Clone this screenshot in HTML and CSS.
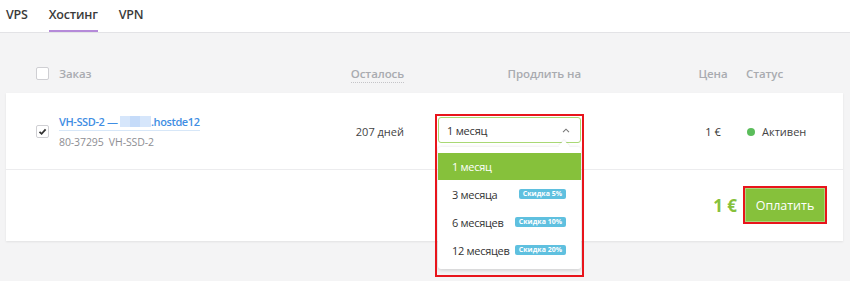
FILE: index.html
```html
<!DOCTYPE html>
<html lang="ru">
<head>
<meta charset="utf-8">
<link rel="stylesheet" href="styles.css">
</head>
<body>
<nav class="tabs">
  <a class="tab">VPS</a>
  <a class="tab active">Хостинг</a>
  <a class="tab">VPN</a>
</nav>
<main class="page">
  <div class="grid head">
    <span class="check"></span>
    <span class="h">Заказ</span>
    <span class="h right"><span class="dotted">Осталось</span></span>
    <span></span>
    <span class="h right">Продлить на</span>
    <span></span>
    <span class="h center">Цена</span>
    <span class="h status-h">Статус</span>
  </div>
  <section class="card">
    <div class="grid row">
      <span class="check checked">
        <svg viewBox="0 0 13 13" width="13" height="13"><path d="M3.5 6.8 L5.6 8.8 L9.6 4.3" fill="none" stroke="#333" stroke-width="1.8"/></svg>
      </span>
      <div class="order">
        <a class="title">VH-SSD-2 — <span class="blur"><i></i><i></i><i></i></span>.hostde12</a>
        <div class="sub">80-37295&nbsp; VH-SSD-2</div>
      </div>
      <span class="right days">207 дней</span>
      <span></span>
      <div class="select-wrap">
        <div class="select">
          <span>1 месяц</span>
          <svg class="chev" viewBox="0 0 8 5" width="8" height="5"><path d="M1 4.2 L4 1.2 L7 4.2" fill="none" stroke="#777" stroke-width="1.1"/></svg>
        </div>
        <ul class="menu">
          <li class="opt sel">1 месяц</li>
          <li class="opt">3 месяца <b class="badge">Скидка 5%</b></li>
          <li class="opt">6 месяцев <b class="badge">Скидка 10%</b></li>
          <li class="opt">12 месяцев <b class="badge">Скидка 20%</b></li>
        </ul>
      </div>
      <span></span>
      <span class="center price">1 €</span>
      <span class="status"><i class="dot"></i>Активен</span>
    </div>
    <div class="pay">
      <span class="total">1 €</span>
      <button class="btn">Оплатить</button>
    </div>
  </section>
</main>
</body>
</html>
```
FILE: styles.css
```css
* { box-sizing: border-box; }
html, body { margin: 0; padding: 0; }
body {
  width: 850px;
  height: 281px;
  overflow: hidden;
  background: #f4f4f5;
  font-family: "Open Sans", "Noto Sans", sans-serif;
  color: #333;
}
.tabs {
  height: 33px;
  background: #fff;
  border-bottom: 1px solid #e3e3e6;
  display: flex;
  gap: 21px;
  padding-left: 6px;
}
.tab {
  font-size: 12.5px;
  font-weight: 600;
  color: #3a3a3a;
  line-height: 30px;
  height: 32px;
  letter-spacing: -0.2px;
}
.tab.active {
  border-bottom: 2px solid #b58ad9;
}
.page {
  padding: 0 7px 0 6px;
}
.grid {
  display: grid;
  grid-template-columns: 23px 245px 100px 34px 143px 100px 64px 98px;
  padding-left: 30px;
  align-items: center;
}
.head {
  height: 60px;
  padding-top: 20px;
}
.h {
  font-size: 11.5px;
  font-weight: 600;
  color: #a9abb0;
  letter-spacing: -0.1px;
}
.right { text-align: right; }
.center { text-align: center; }
.dotted {
  border-bottom: 1px dotted #c4c4c8;
  padding-bottom: 1px;
}
.status-h { padding-left: 1px; }
.check {
  width: 13px;
  height: 13px;
  border: 1px solid #cfcfd3;
  border-radius: 2px;
  background: #fff;
  display: block;
}
.check svg { display: block; margin: -1px; }
.card {
  background: #fff;
  box-shadow: 0 1px 2px rgba(0,0,0,0.08);
  height: 148px;
}
.row {
  height: 77px;
  border-bottom: 1px solid #ececee;
}
.order { margin-top: -5px; }
.title {
  display: inline-block;
  font-size: 11px;
  font-weight: 600;
  color: #3f8ee3;
  border-bottom: 1px solid #d7e7f8;
  padding-bottom: 1px;
  line-height: 15px;
  letter-spacing: -0.4px;
}
.blur {
  display: inline-flex;
  vertical-align: -1px;
  height: 11px;
  width: 31px;
  background: #d6e6fb;
}
.blur i { display: block; height: 11px; width: 10px; }
.blur i:nth-child(2) { background: #c5dbf9; }
.sub {
  font-size: 10.5px;
  color: #8e8e93;
  margin-top: 4px;
  letter-spacing: -0.1px;
}
.days { font-size: 11px; color: #444; padding-top: 1px; }
.select-wrap {
  position: relative;
  height: 26px;
  margin-top: -2px;
}
.select-wrap::after {
  content: "";
  position: absolute;
  left: -3px;
  right: -3px;
  top: -3px;
  height: 159px;
  border: 2px solid #e8141b;
  pointer-events: none;
  z-index: 3;
}
.select {
  height: 26px;
  border: 1px solid #a9d874;
  border-radius: 3px;
  display: flex;
  align-items: center;
  justify-content: space-between;
  padding: 0 10px 0 8px;
  font-size: 11px;
  color: #333;
  background: #fff;
  letter-spacing: -0.2px;
}
.chev { margin-top: 1px; }
.menu {
  position: absolute;
  left: 0;
  top: 30px;
  width: 143px;
  margin: 0;
  padding: 6px 0 5px;
  list-style: none;
  background: #fff;
  border-radius: 3px;
  box-shadow: 0 1px 4px rgba(0,0,0,0.18);
  z-index: 2;
}
.menu::before {
  content: "";
  position: absolute;
  top: -5px;
  right: 13px;
  width: 8px;
  height: 8px;
  background: #fff;
  transform: rotate(45deg);
  box-shadow: -1px -1px 1px rgba(0,0,0,0.06);
}
.opt {
  position: relative;
  height: 28px;
  display: flex;
  align-items: center;
  justify-content: space-between;
  padding: 0 15px 0 14px;
  font-size: 11px;
  color: #333;
  white-space: nowrap;
  letter-spacing: -0.3px;
}
.opt.sel {
  height: 27px;
  background: #86c13b;
  color: #fff;
}
.badge {
  flex-shrink: 0;
  background: #5fc0df;
  color: #fff;
  font-size: 7px;
  font-weight: 700;
  line-height: 10px;
  height: 10px;
  padding: 0 4px;
  border-radius: 2px;
  white-space: nowrap;
  letter-spacing: 0;
}
.price { font-size: 11px; color: #333; padding-top: 1px; }
.status {
  display: flex;
  align-items: center;
  font-size: 11px;
  color: #444;
  padding-left: 2px;
  padding-top: 1px;
}
.dot {
  width: 8px;
  height: 8px;
  border-radius: 50%;
  background: #5bbd5b;
  margin-right: 7px;
}
.pay {
  height: 70px;
  display: flex;
  align-items: center;
  justify-content: flex-end;
  padding-right: 18px;
  gap: 8px;
}
.total {
  font-size: 17px;
  font-weight: 700;
  color: #86c13b;
}
.btn {
  width: 80px;
  height: 34px;
  background: #86c13b;
  border: 1px solid #a9d67c;
  color: #fff;
  font-family: inherit;
  font-size: 12.5px;
  outline: 2px solid #e8141b;
  outline-offset: 0;
  padding: 0;
}
```
